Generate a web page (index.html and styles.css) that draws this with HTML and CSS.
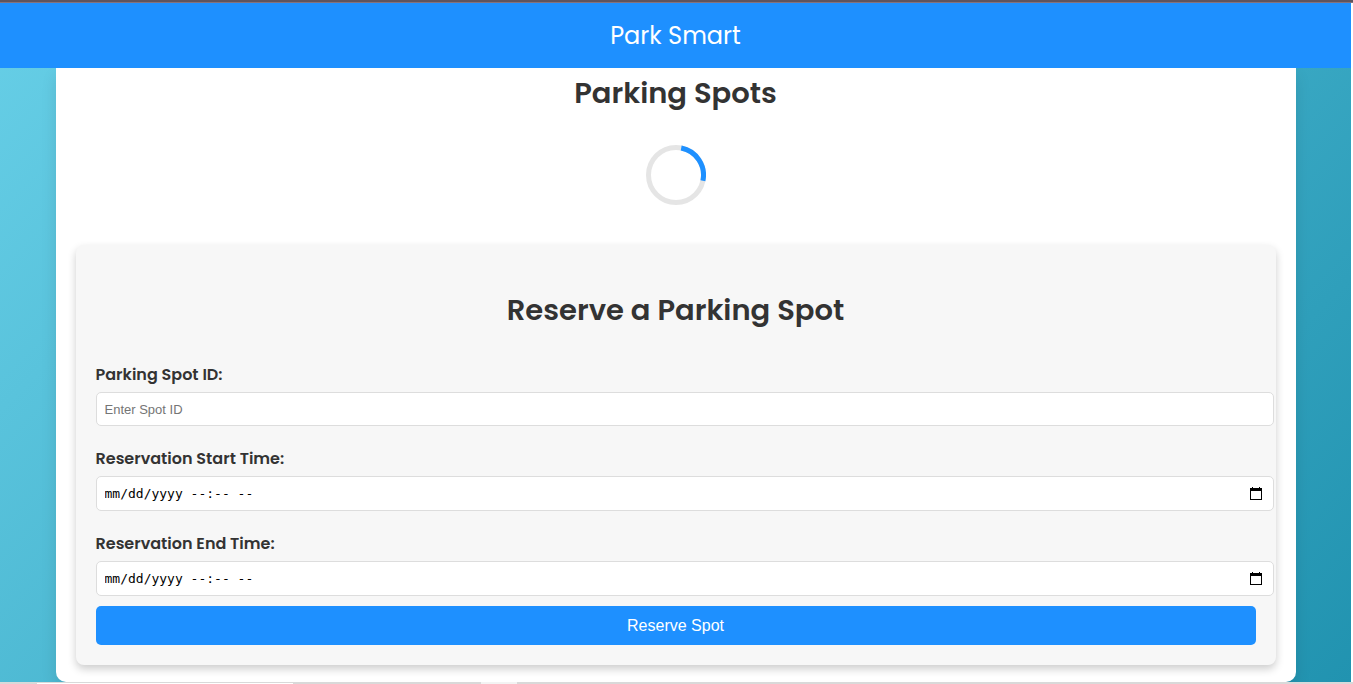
FILE: index.html
```html
<!DOCTYPE html>
<html lang="en">
<head>
<meta charset="utf-8">
<title>Park Smart</title>
<link rel="stylesheet" href="styles.css">
</head>
<body>
<div class="topline"></div>
<div class="page">
  <header class="header">Park Smart</header>
  <main class="container">
    <h2 class="title">Parking Spots</h2>
    <svg class="loader" viewBox="0 0 60 60" role="img" aria-label="Loading">
      <circle cx="30" cy="30" r="27.5" fill="none" stroke="#e5e5e5" stroke-width="5"/>
      <path d="M35.2 3A27.5 27.5 0 0 1 56.9 35.7" fill="none" stroke="#1e90ff" stroke-width="5"/>
    </svg>
    <form class="form">
      <h2 class="title form-title">Reserve a Parking Spot</h2>
      <label class="label" for="spot">Parking Spot ID:</label>
      <div class="field">
        <input class="input" type="text" id="spot" placeholder="Enter Spot ID">
      </div>
      <label class="label" for="start">Reservation Start Time:</label>
      <div class="field">
        <input class="input input-time" type="text" id="start" placeholder="mm/dd/yyyy --:-- --">
        <button class="picker" type="button" aria-label="Pick start time">
          <svg class="picker-icon" viewBox="0 0 12 13"><path d="M2 0h1v1h6V0h1v1h2v12H0V1h2zM1 4v8h10V4z" fill="#000" fill-rule="evenodd"/></svg>
        </button>
      </div>
      <label class="label" for="end">Reservation End Time:</label>
      <div class="field">
        <input class="input input-time" type="text" id="end" placeholder="mm/dd/yyyy --:-- --">
        <button class="picker" type="button" aria-label="Pick end time">
          <svg class="picker-icon" viewBox="0 0 12 13"><path d="M2 0h1v1h6V0h1v1h2v12H0V1h2zM1 4v8h10V4z" fill="#000" fill-rule="evenodd"/></svg>
        </button>
      </div>
      <button class="button" type="button">Reserve Spot</button>
    </form>
  </main>
</div>
<div class="taskbar"><span class="tab"></span><span class="tray"></span></div>
</body>
</html>
```
FILE: styles.css
```css
body {
  margin: 0;
  display: flex;
  flex-direction: column;
  height: 100vh;
  overflow: hidden;
  background: #fff;
  color: #333;
  font-family: Poppins, Inter, sans-serif;
}
.topline {
  flex: none;
  height: 2px;
  border-bottom: 1px solid #85727c;
  background: #5f545e;
}
.page {
  flex: 1;
  min-height: 0;
  overflow: hidden;
  margin-right: 2px;
  background: linear-gradient(135deg, #67cfe7, #2193b0);
}
.header {
  position: relative;
  background: #1e90ff;
  color: #fff;
  font-size: 24px;
  line-height: 65px;
  text-align: center;
}
.container {
  max-width: 1200px;
  margin: 0 auto;
  padding: 0 20px 17px;
  border-radius: 0 0 10px 10px;
  background: #fff;
  box-shadow: 0 8px 16px rgba(0, 0, 0, 0.1);
}
.title {
  margin: 0;
  font-size: 29px;
  font-weight: 600;
  line-height: 50px;
  text-align: center;
}
.loader {
  display: block;
  width: 60px;
  height: 60px;
  margin: 27px auto 40px;
}
.form {
  padding: 20px;
  border-radius: 8px;
  background: #f7f7f7;
  box-shadow: 0 4px 8px rgba(0, 0, 0, 0.2);
}
.form-title {
  margin: 20px 0 27px;
}
.label {
  display: block;
  margin-bottom: 5px;
  font-size: 16px;
  font-weight: 600;
  line-height: 25px;
}
.field {
  display: flex;
  align-items: center;
  box-sizing: content-box;
  width: 100%;
  margin-bottom: 20px;
  padding: 8px;
  border: 1px solid #ddd;
  border-radius: 5px;
  background: #fff;
}
.input {
  flex: 1;
  min-width: 0;
  height: 16px;
  padding: 0;
  border: 0;
  background: none;
  color: #000;
  font-family: "Liberation Sans", sans-serif;
  font-size: 13px;
}
.input::placeholder {
  color: #757575;
}
.input-time {
  height: 17px;
  font-family: "DejaVu Sans Mono", monospace;
}
.input-time::placeholder {
  color: #000;
}
.picker {
  display: flex;
  margin-right: 3px;
  padding: 0;
  border: 0;
  background: none;
}
.picker-icon {
  width: 12px;
  height: 13px;
}
.field:last-of-type {
  margin-bottom: 10px;
}
.button {
  display: block;
  width: 100%;
  padding: 10px;
  border: 0;
  border-radius: 5px;
  background: #1e90ff;
  color: #fff;
  font-family: "Liberation Sans", sans-serif;
  font-size: 16px;
  line-height: 19px;
}
.taskbar {
  display: flex;
  flex: none;
  height: 2px;
  background: #d9d9d9;
}
.tab {
  width: 256px;
  margin: 1px 188px 0 37px;
  background: #fff;
}
.tray {
  width: 36px;
  background: #f3f3f3;
}
```
